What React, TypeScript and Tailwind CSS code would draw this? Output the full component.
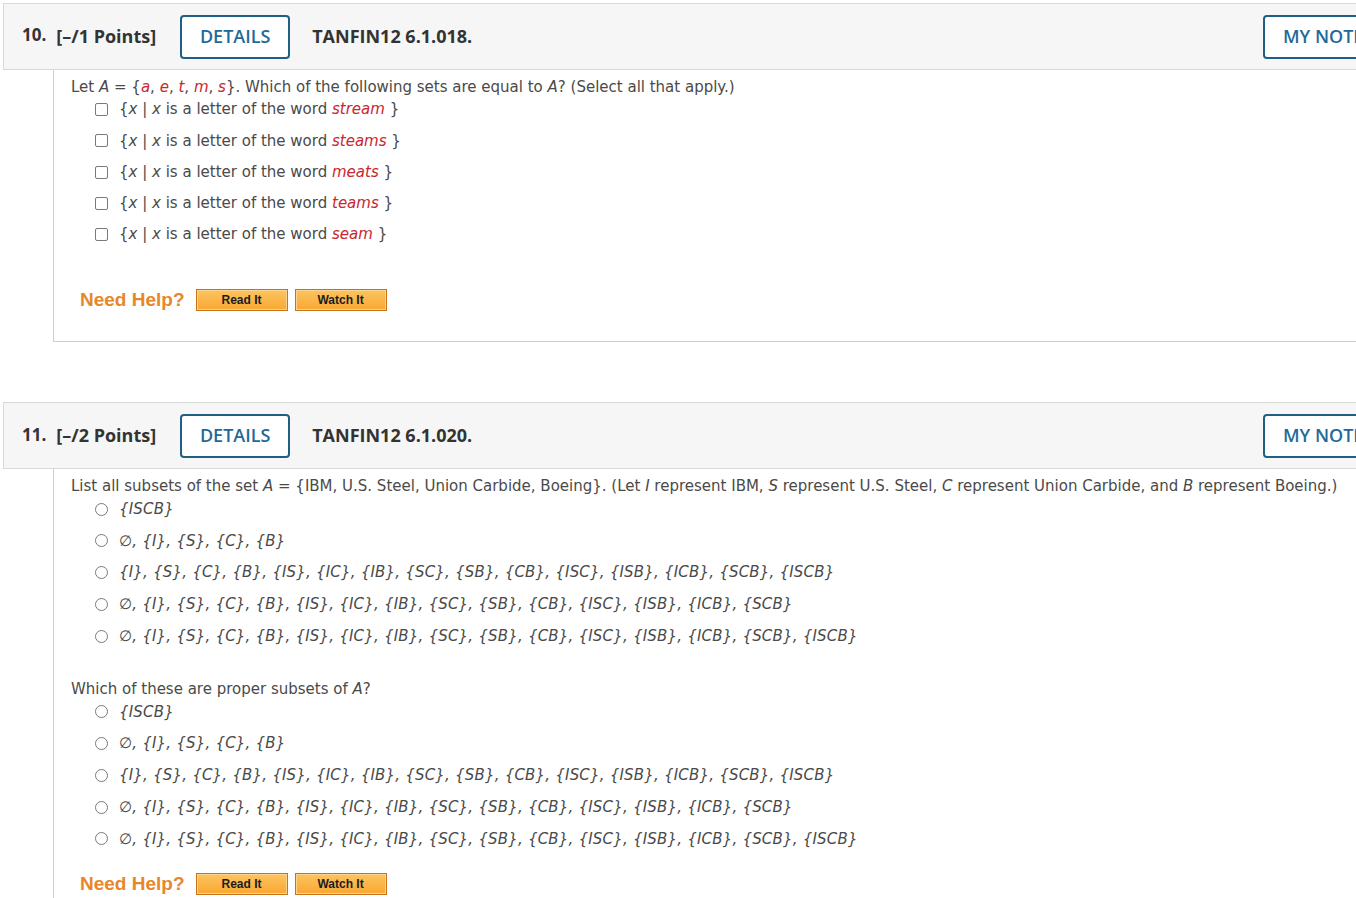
import { ReactNode } from "react";

const body = "font-['DejaVu_Sans','Verdana',sans-serif]";
const head = "font-['Open_Sans',sans-serif]";

const Red = ({ children }: { children: ReactNode }) => (
  <i className="text-[#c8282d]">{children}</i>
);

const Box = ({ round }: { round?: boolean }) => (
  <span
    className={`inline-block h-[13px] w-[13px] shrink-0 border border-[#7a7a7a] bg-white ${
      round ? "rounded-full" : "rounded-[2px]"
    }`}
  />
);

interface OptionProps {
  round?: boolean;
  h: string;
  children: ReactNode;
}

const Option = ({ round, h, children }: OptionProps) => (
  <div className={`flex ${h} items-center pl-[24px]`}>
    <Box round={round} />
    <span className="ml-[11px] whitespace-nowrap">{children}</span>
  </div>
);

const HelpButton = ({ label }: { label: string }) => (
  <button className="h-[22px] w-[92px] border border-[#c9721c] bg-gradient-to-b from-[#fcc45e] to-[#f9a730] p-0">
    <span className="flex h-full w-full items-center justify-center border border-[#fdd58f] font-['Liberation_Sans',Arial,sans-serif] text-[12px] font-bold text-[#1c1c1c]">
      {label}
    </span>
  </button>
);

const NeedHelp = ({ className }: { className: string }) => (
  <div className={`flex h-[22px] items-center ${className}`}>
    <span className="ml-[9px] font-['Liberation_Sans',Arial,sans-serif] text-[19px] font-bold text-[#e8862a]">
      Need Help?
    </span>
    <div className="ml-[11px] flex gap-[7px]">
      <HelpButton label="Read It" />
      <HelpButton label="Watch It" />
    </div>
  </div>
);

interface HeaderProps {
  num: string;
  points: string;
  code: string;
}

const QuestionHeader = ({ num, points, code }: HeaderProps) => (
  <div
    className={`${head} flex h-[67px] w-[1420px] items-center border border-[#d9d9d9] bg-[#f6f6f6] pl-[18px] text-[#333]`}
  >
    <span className="mb-[3px] text-[17px] font-bold">{num}</span>
    <span className="ml-[10px] text-[18px] font-bold">{points}</span>
    <button className="ml-[24px] flex h-[44px] w-[110px] items-center justify-center rounded-[4px] border-2 border-[#1f5f84] bg-white text-[18px] font-semibold text-[#1f6a99]">
      DETAILS
    </button>
    <span className="ml-[22px] text-[18px] font-bold">{code}</span>
    <div className="flex-1" />
    <button className="mr-[34px] flex h-[44px] w-[125px] items-center justify-start rounded-[4px] border-2 border-[#1f5f84] bg-white pl-[18px] text-[18px] font-semibold text-[#1f6a99]">
      MY NOTES
    </button>
  </div>
);

const letter = "is a letter of the word";

const subsetOptions = [
  "{ISCB}",
  "∅, {I}, {S}, {C}, {B}",
  "{I}, {S}, {C}, {B}, {IS}, {IC}, {IB}, {SC}, {SB}, {CB}, {ISC}, {ISB}, {ICB}, {SCB}, {ISCB}",
  "∅, {I}, {S}, {C}, {B}, {IS}, {IC}, {IB}, {SC}, {SB}, {CB}, {ISC}, {ISB}, {ICB}, {SCB}",
  "∅, {I}, {S}, {C}, {B}, {IS}, {IC}, {IB}, {SC}, {SB}, {CB}, {ISC}, {ISB}, {ICB}, {SCB}, {ISCB}",
];

export default function App() {
  return (
    <div className="h-[898px] w-[1356px] overflow-hidden bg-white pl-[3px] pt-[3px]">
      {/* question 10 */}
      <QuestionHeader num="10." points="[–/1 Points]" code="TANFIN12 6.1.018." />
      <div
        className={`${body} ml-[50px] w-[1400px] border-b border-l border-[#cfcfcf] pb-[30px] pl-[17px] pt-[10px] text-[15px] text-[#4a4a4a]`}
      >
        <div className="leading-[14px] whitespace-nowrap">
          Let <i>A</i> = {"{"}
          <Red>a</Red>, <Red>e</Red>, <Red>t</Red>, <Red>m</Red>, <Red>s</Red>
          {"}"}. Which of the following sets are equal to <i>A</i>? (Select all that apply.)
        </div>
        {["stream", "steams", "meats", "teams", "seam"].map((w) => (
          <Option key={w} h="h-[31.25px]">
            {"{"}
            <i>x</i> | <i>x</i> {letter} <Red>{w}</Red> {"}"}
          </Option>
        ))}
        <NeedHelp className="mt-[39px]" />
      </div>

      {/* question 11 */}
      <div className="mt-[60px]">
        <QuestionHeader num="11." points="[–/2 Points]" code="TANFIN12 6.1.020." />
      </div>
      <div
        className={`${body} ml-[50px] w-[1400px] border-l border-[#cfcfcf] pb-[30px] pl-[17px] pt-[10px] text-[15px] text-[#4a4a4a]`}
      >
        <div className="leading-[14px] whitespace-nowrap">
          List all subsets of the set <i>A</i> = {"{"}IBM, U.S. Steel, Union Carbide, Boeing{"}"}. (Let <i>I</i> represent
          IBM, <i>S</i> represent U.S. Steel, <i>C</i> represent Union Carbide, and <i>B</i> represent Boeing.)
        </div>
        {subsetOptions.map((o, i) => (
          <Option key={"a" + i} round h="h-[31.75px]">
            <i className="tracking-[0.2px]">{o}</i>
          </Option>
        ))}
        <div className="mt-[30px] leading-[14px]">
          Which of these are proper subsets of <i>A</i>?
        </div>
        {subsetOptions.map((o, i) => (
          <Option key={"b" + i} round h="h-[31.75px]">
            <i className="tracking-[0.2px]">{o}</i>
          </Option>
        ))}
        <NeedHelp className="mt-[18px]" />
      </div>
    </div>
  );
}
